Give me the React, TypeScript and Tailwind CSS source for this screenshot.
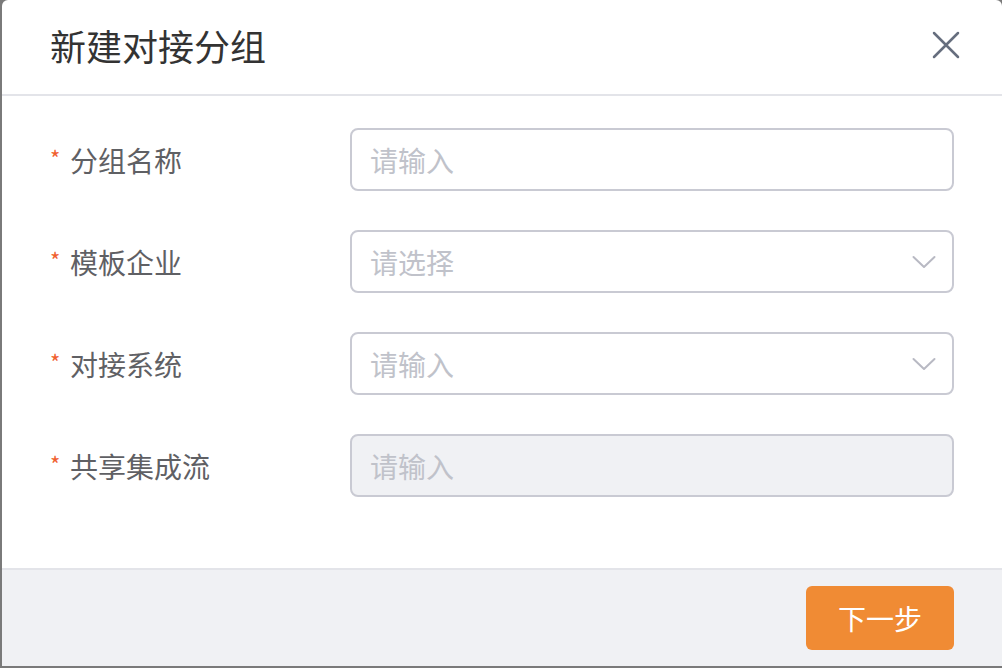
import React from 'react';

const font = { fontFamily: '"Noto Sans CJK SC", "Liberation Sans", sans-serif' };

function Chevron() {
  return (
    <svg width="24" height="14" viewBox="0 0 24 14" fill="none" className="shrink-0">
      <path d="M1.5 2 L12 12 L22.5 2" stroke="#b8b9c3" strokeWidth="2" strokeLinecap="round" strokeLinejoin="round" />
    </svg>
  );
}

function Field({ label, placeholder, select, disabled }: { label: string; placeholder: string; select?: boolean; disabled?: boolean }) {
  return (
    <div className="flex items-center">
      <div className="w-[348px] pl-[48px] flex items-center text-[28px] text-[#5f6064]">
        <span className="text-[#f0602e] text-[22px] w-[20px] leading-none -mt-[6px]">*</span>
        <span>{label}</span>
      </div>
      <div
        className={`w-[604px] h-[63px] rounded-[8px] border-2 border-[#c9cad3] flex items-center justify-between pl-[18px] pr-[16px] ${
          disabled ? 'bg-[#f0f1f4]' : 'bg-white'
        }`}
      >
        <span className="text-[28px] text-[#c0c2ca]">{placeholder}</span>
        {select && <Chevron />}
      </div>
    </div>
  );
}

export default function App() {
  return (
    <div className="w-[1002px] h-[668px] bg-[#7a7a7a] pl-[2px] overflow-hidden" style={font}>
      <div className="w-[1000px] h-[666px] bg-white rounded-t-[6px] flex flex-col overflow-hidden">
        <div className="h-[96px] shrink-0 flex items-center justify-between pl-[48px] pr-[42px] border-b-2 border-[#e3e4e9]">
          <span className="text-[36px] text-[#333333] -mt-[4px]">新建对接分组</span>
          <svg width="28" height="28" viewBox="0 0 28 28" fill="none" className="-mt-[4px]">
            <path d="M2 2 L26 26 M26 2 L2 26" stroke="#666e7e" strokeWidth="2.5" strokeLinecap="round" />
          </svg>
        </div>

        <div className="flex-1 pt-[32px] flex flex-col gap-[39px]">
          <Field label="分组名称" placeholder="请输入" />
          <Field label="模板企业" placeholder="请选择" select />
          <Field label="对接系统" placeholder="请输入" select />
          <Field label="共享集成流" placeholder="请输入" disabled />
        </div>

        <div className="h-[98px] shrink-0 border-t-2 border-[#e3e4e9] bg-[#f0f1f4] flex justify-end items-start pt-[16px] pr-[48px]">
          <button className="w-[148px] h-[64px] rounded-[6px] bg-[#f08b34] text-white text-[28px]">下一步</button>
        </div>
      </div>
    </div>
  );
}
